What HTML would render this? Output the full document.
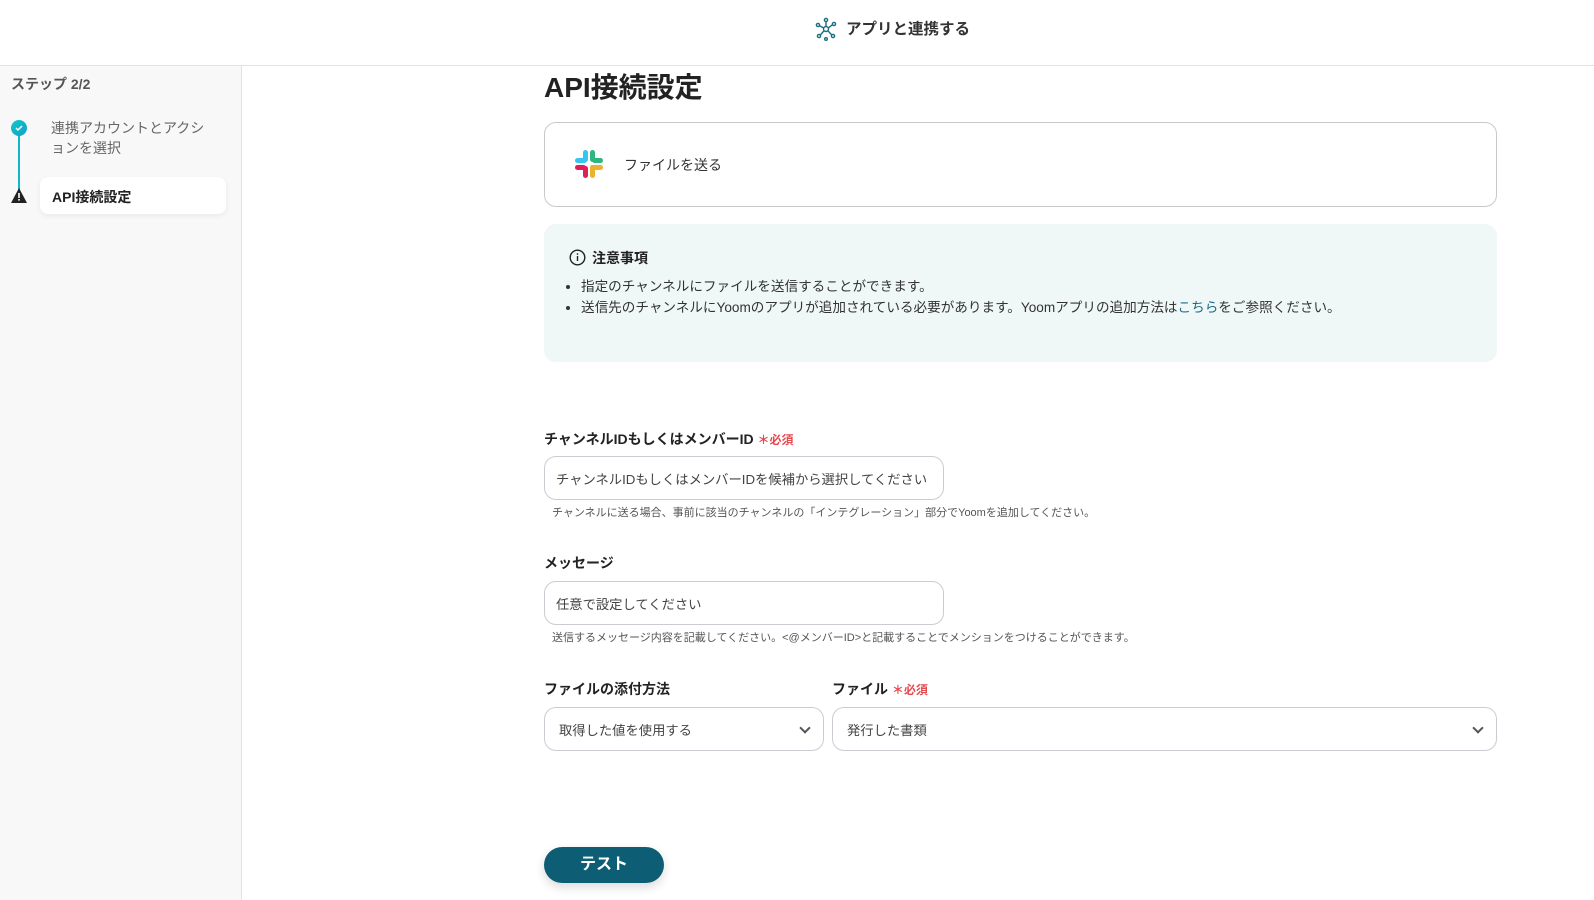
<!DOCTYPE html>
<html><head><meta charset="utf-8"><style>
*{box-sizing:border-box;margin:0;padding:0}
body{width:1594px;height:900px;overflow:hidden;background:#fff;font-family:"Liberation Sans","Noto Sans CJK JP",sans-serif;color:#222;position:relative}
.hdr{position:absolute;left:0;top:0;width:1594px;height:66px;border-bottom:1px solid #e2e2e2;background:#fff}
.hdr .t{position:absolute;left:846px;top:17px;font-size:15.5px;font-weight:bold;color:#333}
.side{position:absolute;left:0;top:66px;width:242px;height:834px;background:#f8f8f8;border-right:1px solid #e2e2e2}
.abs{position:absolute}
.lbl{position:absolute;font-size:14px;font-weight:bold;color:#222}
.req{color:#e5484d;font-size:12px;font-weight:bold}
.inp{position:absolute;border:1px solid #c9cdd2;border-radius:12px;background:#fff;font-size:13.3px;color:#444;padding-left:11px;display:flex;align-items:center;white-space:nowrap}
.hint{position:absolute;font-size:11px;color:#555;white-space:nowrap}
.chev{position:absolute;right:14px;top:16px;width:8px;height:8px;border-right:2px solid #555;border-bottom:2px solid #555;transform:rotate(45deg)}
</style></head><body>
<div class="hdr">
<svg class="abs" style="left:815px;top:17px" width="22" height="24" viewBox="0 0 22 24" fill="none" stroke="#1b6d83" stroke-width="1.4"><circle cx="11" cy="12" r="2.5"/><circle cx="11" cy="3" r="1.6"/><circle cx="3" cy="8" r="1.6"/><circle cx="19" cy="7" r="1.6"/><circle cx="4" cy="19" r="1.6"/><circle cx="18" cy="19" r="1.6"/><circle cx="11" cy="22" r="1.3"/><path d="M11 4.6V9.5M4.5 8.7L8.7 11M17.5 7.7L13.3 11M5.3 18L9 13.8M16.8 18L13 13.8"/></svg>
<div class="t">アプリと連携する</div>
</div>
<div class="side">
<div class="abs" style="left:11px;top:8px;font-size:14px;font-weight:bold;color:#555">ステップ 2/2</div>
<div class="abs" style="left:18px;top:61px;width:2px;height:70px;background:#13b8c8"></div>
<div class="abs" style="left:11px;top:54px;width:16px;height:16px;border-radius:50%;background:linear-gradient(135deg,#13c8c8,#12a0c8)"></div>
<svg class="abs" style="left:14px;top:57px" width="10" height="10" viewBox="0 0 10 10"><path d="M2 5l2 2 4-4" stroke="#fff" stroke-width="1.5" fill="none"/></svg>
<svg class="abs" style="left:11px;top:122px" width="16" height="15" viewBox="0 0 16 15"><path d="M8 0L16 15H0z" fill="#222"/><rect x="7.2" y="5" width="1.6" height="5" fill="#fff"/><rect x="7.2" y="11" width="1.6" height="1.6" fill="#fff"/></svg>
<div class="abs" style="left:51px;top:52px;font-size:14px;color:#666;line-height:20px;width:160px">連携アカウントとアクションを選択</div>
<div class="abs" style="left:40px;top:111px;width:186px;height:37px;background:#fff;border-radius:8px;box-shadow:0 2px 6px rgba(0,0,0,.06);font-size:14px;font-weight:bold;padding:10px 12px">API接続設定</div>
</div>
<div class="abs" style="left:544px;top:66px;font-size:28px;font-weight:bold;color:#222">API接続設定</div>
<div class="abs" style="left:544px;top:122px;width:953px;height:85px;border:1px solid #c9c9c9;border-radius:12px"></div>
<svg class="abs" style="left:574px;top:149px" width="30" height="30" viewBox="0 0 30 30">
<rect x="1" y="9" width="12" height="5" rx="2.5" fill="#36c5f0"/><rect x="9" y="1" width="5" height="12" rx="2.5" fill="#36c5f0"/>
<rect x="16" y="1" width="5" height="12" rx="2.5" fill="#2eb67d"/><rect x="18" y="9" width="11" height="5" rx="2.5" fill="#2eb67d"/>
<rect x="1" y="16" width="11" height="5" rx="2.5" fill="#e01e5a"/><rect x="9" y="17" width="5" height="12" rx="2.5" fill="#e01e5a"/>
<rect x="16" y="16" width="13" height="5" rx="2.5" fill="#ecb22e"/><rect x="16" y="16" width="5" height="13" rx="2.5" fill="#ecb22e"/></svg>
<div class="abs" style="left:624px;top:155px;font-size:14px;color:#333">ファイルを送る</div>
<div class="abs" style="left:544px;top:224px;width:953px;height:138px;background:#f0f8f7;border-radius:12px"></div>
<svg class="abs" style="left:569px;top:249px" width="17" height="17" viewBox="0 0 17 17"><circle cx="8.5" cy="8.5" r="7.3" fill="none" stroke="#222" stroke-width="1.4"/><rect x="7.8" y="7" width="1.4" height="5" fill="#222"/><rect x="7.8" y="4.3" width="1.4" height="1.5" fill="#222"/></svg>
<div class="abs" style="left:592px;top:248px;font-size:14px;font-weight:bold">注意事項</div>
<ul class="abs" style="left:581px;top:276px;font-size:13.6px;color:#333;line-height:21px;padding-left:0;white-space:nowrap">
<li>指定のチャンネルにファイルを送信することができます。</li>
<li>送信先のチャンネルにYoomのアプリが追加されている必要があります。Yoomアプリの追加方法は<span style="color:#1a6a8a">こちら</span>をご参照ください。</li>
</ul>
<div class="lbl" style="left:544px;top:429px">チャンネルIDもしくはメンバーID <span class="req">＊必須</span></div>
<div class="inp" style="left:544px;top:456px;width:400px;height:44px">チャンネルIDもしくはメンバーIDを候補から選択してください</div>
<div class="hint" style="left:552px;top:504px">チャンネルに送る場合、事前に該当のチャンネルの「インテグレーション」部分でYoomを追加してください。</div>
<div class="lbl" style="left:544px;top:553px">メッセージ</div>
<div class="inp" style="left:544px;top:581px;width:400px;height:44px">任意で設定してください</div>
<div class="hint" style="left:552px;top:629px">送信するメッセージ内容を記載してください。&lt;@メンバーID&gt;と記載することでメンションをつけることができます。</div>
<div class="lbl" style="left:544px;top:679px">ファイルの添付方法</div>
<div class="inp" style="left:544px;top:707px;width:280px;height:44px;padding-left:14px">取得した値を使用する<div class="chev"></div></div>
<div class="lbl" style="left:832px;top:679px">ファイル <span class="req">＊必須</span></div>
<div class="inp" style="left:832px;top:707px;width:665px;height:44px;padding-left:14px">発行した書類<div class="chev"></div></div>
<div class="abs" style="left:544px;top:847px;width:120px;height:36px;border-radius:18px;background:#0d5e75;color:#fff;font-size:16px;font-weight:bold;text-align:center;line-height:36px;box-shadow:0 4px 10px rgba(0,0,0,.15)">テスト</div>
</body></html>
